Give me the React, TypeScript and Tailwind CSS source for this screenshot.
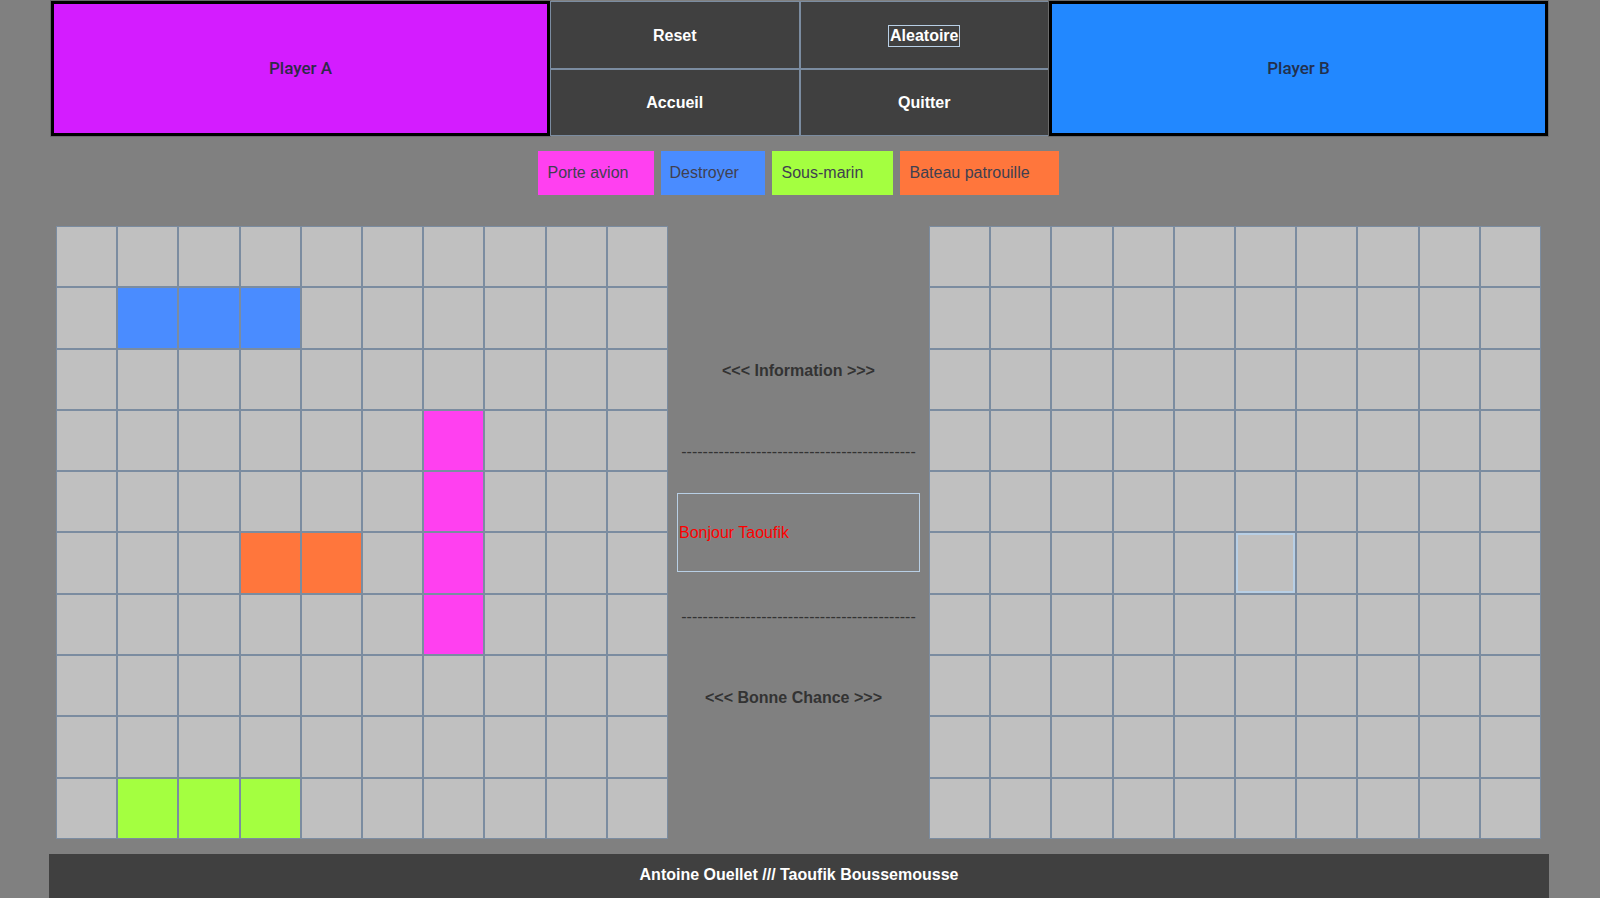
import React from "react";

const SHIPS: Record<string, string> = {
  "1-1": "#4a8cff",
  "1-2": "#4a8cff",
  "1-3": "#4a8cff",
  "3-6": "#ff40f0",
  "4-6": "#ff40f0",
  "5-6": "#ff40f0",
  "6-6": "#ff40f0",
  "5-3": "#ff763c",
  "5-4": "#ff763c",
  "9-1": "#a4ff40",
  "9-2": "#a4ff40",
  "9-3": "#a4ff40",
};

function Board({ ships, focus }: { ships?: Record<string, string>; focus?: string }) {
  const cells = [];
  for (let r = 0; r < 10; r++) {
    for (let c = 0; c < 10; c++) {
      const key = `${r}-${c}`;
      const color = ships?.[key];
      cells.push(
        <div
          key={key}
          className="border border-[#7b8ca0] bg-[#c0c0c0]"
          style={color ? { backgroundColor: color } : undefined}
        >
          {focus === key && <div className="h-full w-full border-2 border-[#b8cfe5]" />}
        </div>
      );
    }
  }
  return <div className="grid h-[613px] w-[612px] grid-cols-10 grid-rows-10">{cells}</div>;
}

const dashes = "-".repeat(44);

export default function App() {
  return (
    <div className="h-[898px] w-[1600px] overflow-hidden bg-[#808080] font-['Liberation_Sans',Arial,sans-serif]">
      {/* top bar */}
      <div className="ml-[51px] mt-[1px] grid h-[135px] w-[1497px] grid-cols-3">
        <div className="flex items-center justify-center border-[3px] border-black bg-[#d41cff] font-['Roboto',sans-serif] text-[17px] font-medium text-[#2e2a48] outline outline-1 outline-[#6a6a6a]">
          Player A
        </div>
        <div className="grid grid-cols-2 grid-rows-2 gap-[2px] bg-[#7b8ca0] p-[1px] text-[16px] font-bold text-white">
          <div className="flex items-center justify-center pt-[2px] bg-[#404040]">Reset</div>
          <div className="flex items-center justify-center pt-[2px] bg-[#404040]">
            <span className="border border-[#b8cfe5] px-[1px] leading-[20px]">Aleatoire</span>
          </div>
          <div className="flex items-center justify-center pt-[2px] bg-[#404040]">Accueil</div>
          <div className="flex items-center justify-center pt-[2px] bg-[#404040]">Quitter</div>
        </div>
        <div className="flex items-center justify-center border-[3px] border-black bg-[#2288ff] font-['Roboto',sans-serif] text-[17px] font-medium text-[#22304d] outline outline-1 outline-[#6a6a6a]">
          Player B
        </div>
      </div>

      {/* legend */}
      <div className="mt-[15px] flex h-[44px] justify-center gap-[7px] pr-[4px] text-[16px] text-[#404050]">
        <div className="flex w-[116px] items-center bg-[#ff40f0] pl-[10px]">Porte avion</div>
        <div className="flex w-[104px] items-center bg-[#4a8cff] pl-[9px]">Destroyer</div>
        <div className="flex w-[121px] items-center bg-[#a4ff40] pl-[10px]">Sous-marin</div>
        <div className="flex w-[159px] items-center bg-[#ff763c] pl-[10px]">Bateau patrouille</div>
      </div>

      {/* boards */}
      <div className="ml-[56px] mt-[31px] flex">
        <Board ships={SHIPS} />
        <div className="flex w-[261px] flex-col justify-center pt-[3px]">
          <div className="flex h-[81px] items-center justify-center text-[16px] font-bold text-[#333]">
            &lt;&lt;&lt; Information &gt;&gt;&gt;
          </div>
          <div className="flex h-[81px] items-center justify-center overflow-hidden text-[16px] text-[#333]">
            {dashes}
          </div>
          <div className="flex h-[81px] items-center px-[9px]">
            <div className="flex h-[79px] w-full items-center border border-[#b8cfe5] pl-[1px] text-[16px] text-[#ff0000]">
              Bonjour Taoufik
            </div>
          </div>
          <div className="mt-[3px] flex h-[81px] items-center justify-center overflow-hidden text-[16px] text-[#333]">
            {dashes}
          </div>
          <div className="flex h-[81px] items-center justify-center pr-[10px] text-[16px] font-bold text-[#333]">
            &lt;&lt;&lt; Bonne Chance &gt;&gt;&gt;
          </div>
        </div>
        <Board focus="5-5" />
      </div>

      {/* footer */}
      <div className="ml-[49px] mt-[15px] flex h-[44px] w-[1500px] items-center justify-center bg-[#404040] pb-[3px] text-[16px] font-bold text-white">
        Antoine Ouellet /// Taoufik Boussemousse
      </div>
    </div>
  );
}
